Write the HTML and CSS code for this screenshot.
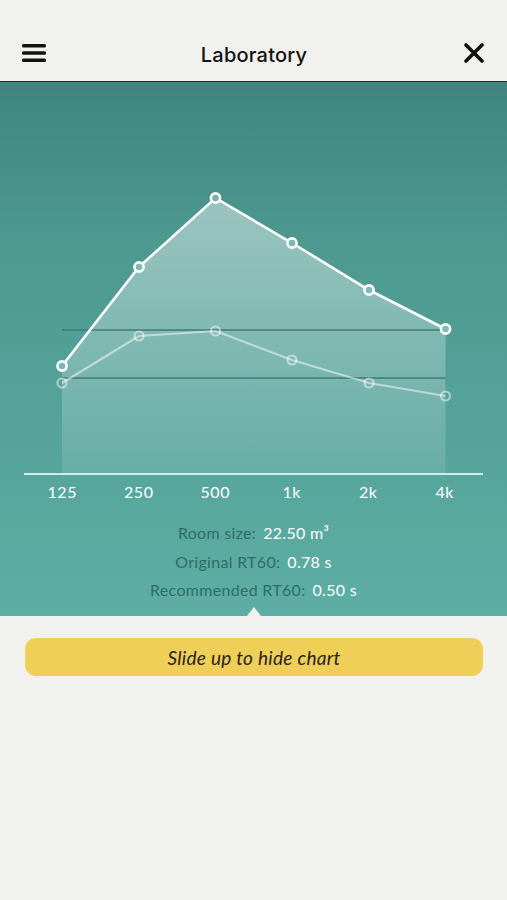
FILE: index.html
```html
<!DOCTYPE html>
<html lang="en">
<head>
    <meta charset="UTF-8">
    <meta name="viewport" content="width=device-width, initial-scale=1.0">
    <title>Laboratory</title>
    <link rel="stylesheet" href="styles.css">
</head>
<body>

<!-- Top bar -->
<header class="topbar">
    <button class="icon-btn" aria-label="Menu">
        <svg width="24" height="20" viewBox="0 0 24 20">
            <rect x="0" y="1" width="24" height="3.5" rx="1.5" fill="#111"/>
            <rect x="0" y="8.3" width="24" height="3.5" rx="1.5" fill="#111"/>
            <rect x="0" y="15.5" width="24" height="3.5" rx="1.5" fill="#111"/>
        </svg>
    </button>
    <h1 class="title">Laboratory</h1>
    <button class="icon-btn" aria-label="Close">
        <svg width="20" height="20" viewBox="0 0 20 20">
            <path d="M2 2 L18 18 M18 2 L2 18" stroke="#111" stroke-width="3.6" stroke-linecap="round"/>
        </svg>
    </button>
</header>

<!-- Chart panel -->
<section class="panel">
    <div class="chart">
        <svg class="plot" width="459" height="393" viewBox="0 0 459 393">
            <defs>
                <linearGradient id="fillGrad" x1="0" y1="116" x2="0" y2="392" gradientUnits="userSpaceOnUse">
                    <stop offset="0" stop-color="#fff" stop-opacity="0.45"/>
                    <stop offset="1" stop-color="#fff" stop-opacity="0.1"/>
                </linearGradient>
            </defs>
            <polygon points="38,284 115,185 191.5,116 268,161 345,208 421.5,247 421.5,392 38,392" fill="url(#fillGrad)"/>
            <line x1="38" y1="248" x2="421.5" y2="248" stroke="#3f7b75" stroke-width="1.6"/>
            <line x1="38" y1="296" x2="421.5" y2="296" stroke="#3f7b75" stroke-width="1.6"/>
            <g fill="none" stroke="rgba(255,255,255,0.5)" stroke-width="2.2">
                <polyline points="38,301 115,254 191.5,249 268,278 345,301 421.5,314"/>
                <circle cx="38" cy="301" r="4.5"/>
                <circle cx="115" cy="254" r="4.5"/>
                <circle cx="191.5" cy="249" r="4.5"/>
                <circle cx="268" cy="278" r="4.5"/>
                <circle cx="345" cy="301" r="4.5"/>
                <circle cx="421.5" cy="314" r="4.5"/>
            </g>
            <g stroke="#fff" stroke-width="2.6">
                <polyline fill="none" points="38,284 115,185 191.5,116 268,161 345,208 421.5,247"/>
                <circle cx="38" cy="284" r="4.6" fill="#7ab8b0"/>
                <circle cx="115" cy="185" r="4.6" fill="#7cbab2"/>
                <circle cx="191.5" cy="116" r="4.6" fill="#76b2aa"/>
                <circle cx="268" cy="161" r="4.6" fill="#7cb9b1"/>
                <circle cx="345" cy="208" r="4.6" fill="#7fbbb3"/>
                <circle cx="421.5" cy="247" r="4.6" fill="#80bcb4"/>
            </g>
            <line x1="0" y1="392" x2="459" y2="392" stroke="#fff" stroke-width="1.6"/>
        </svg>
        <div class="bands">
            <span>125</span>
            <span>250</span>
            <span>500</span>
            <span>1k</span>
            <span>2k</span>
            <span>4k</span>
        </div>
    </div>

    <div class="info">
        <p><span class="key">Room size:</span><span class="val">22.50 m³</span></p>
        <p><span class="key">Original RT60:</span><span class="val">0.78 s</span></p>
        <p><span class="key">Recommended RT60:</span><span class="val">0.50 s</span></p>
    </div>
    <span class="notch"></span>
</section>

<div class="actions">
    <button class="slide-btn">Slide up to hide chart</button>
</div>

</body>
</html>
```

FILE: styles.css
```css
body {
    margin: 0;
    padding: 0;
    background-color: #f1f1ed;
    font-family: Lato, 'Open Sans', sans-serif;
}

.topbar {
    height: 82px;
    display: flex;
    align-items: flex-end;
    justify-content: space-between;
    padding: 0 21px 0 22px;
    box-sizing: border-box;
    border-bottom: 1.5px solid #2a2f2e;
}

.icon-btn {
    background: none;
    border: none;
    padding: 0;
    margin-bottom: 18px;
    width: 24px;
    height: 20px;
    display: flex;
    align-items: center;
    justify-content: center;
}

.title {
    margin: 0 0 14px;
    font-family: Inter, 'Liberation Sans', sans-serif;
    font-size: 20px;
    font-weight: 500;
    color: #111;
    letter-spacing: 0.2px;
}

.panel {
    position: relative;
    height: 534px;
    background: linear-gradient(to bottom, #3f8480 0%, #4d9990 30%, #5daea4 100%);
    box-sizing: border-box;
}

.chart {
    margin: 0 24px;
}

.plot {
    display: block;
}

.bands {
    display: grid;
    grid-template-columns: repeat(6, 1fr);
    margin-top: 7px;
    color: #fff;
    font-size: 16px;
    text-align: center;
    letter-spacing: 0.6px;
}

.info {
    margin-top: 18px;
    text-align: center;
    font-size: 16px;
    letter-spacing: 0.3px;
}

.info p {
    margin: 0;
    line-height: 28.5px;
}

.key {
    color: #2e6d66;
    margin-right: 7px;
}

.val {
    color: #fff;
}

.notch {
    position: absolute;
    left: 247px;
    bottom: 0;
    width: 0;
    height: 0;
    border-left: 7px solid transparent;
    border-right: 7px solid transparent;
    border-bottom: 9px solid #f1f1ed;
}

.actions {
    padding: 22px 24px 0 25px;
}

.slide-btn {
    display: block;
    width: 100%;
    height: 38px;
    border: none;
    border-radius: 11px;
    background-color: #f0cf58;
    color: #27231a;
    font-family: Lato, sans-serif;
    font-style: italic;
    font-weight: 400;
    font-size: 19px;
    letter-spacing: 0.3px;
    cursor: pointer;
}
```
